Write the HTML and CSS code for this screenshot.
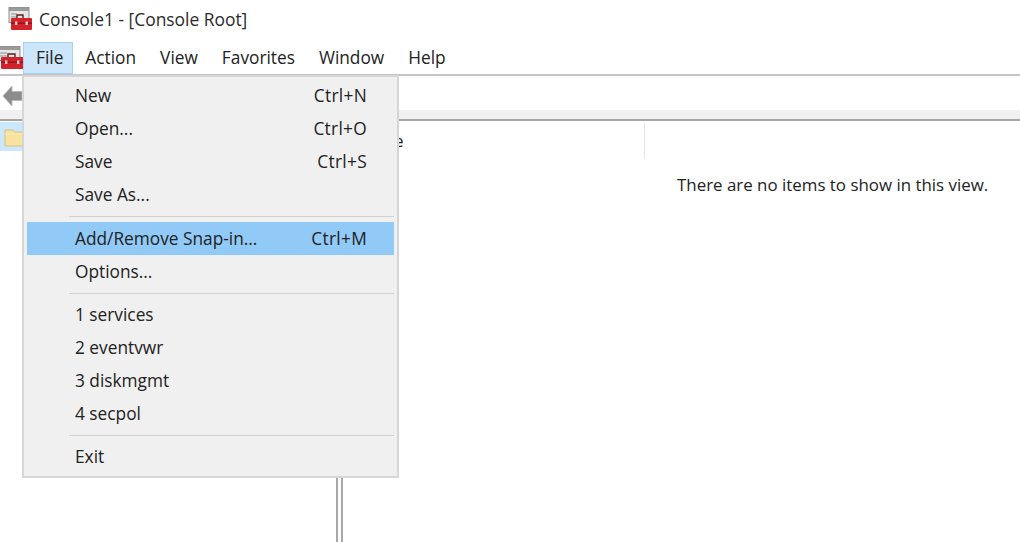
FILE: index.html
```html
<!DOCTYPE html>
<html lang="en">
<head>
<meta charset="utf-8">
<title>Console1 - [Console Root]</title>
<link rel="stylesheet" href="styles.css">
</head>
<body>
<div class="app">
  <header class="titlebar">
    <svg class="title-icon" viewBox="0 0 24 24" aria-hidden="true">
      <rect x="1" y="0.5" width="20" height="15" fill="#e6e6e6" stroke="#8d8d8d"/>
      <rect x="1" y="0.5" width="20" height="3.5" fill="#9a9a9a"/>
      <path d="M3 7h6M3 10h6M3 13h5" stroke="#8d8d8d" fill="none"/>
      <path d="M9 11V8h6v3" fill="none" stroke="#5a2020" stroke-width="1.4"/>
      <rect x="3" y="11" width="21" height="12" rx="1" fill="#d2232a"/>
      <rect x="3" y="15.5" width="21" height="1.4" fill="#8f1418"/>
      <rect x="7" y="14.5" width="2.4" height="3.4" fill="#f3d0d0"/>
      <rect x="17.5" y="14.5" width="2.4" height="3.4" fill="#f3d0d0"/>
    </svg>
    <span class="title-text">Console1 - [Console Root]</span>
  </header>
  <nav class="menubar">
    <svg class="menu-icon" viewBox="0 0 24 24" aria-hidden="true">
      <rect x="-3" y="0.5" width="23" height="14" fill="#e6e6e6" stroke="#8d8d8d"/>
      <rect x="-3" y="0.5" width="23" height="3.5" fill="#9a9a9a"/>
      <path d="M0 7h7M0 10h7" stroke="#8d8d8d" fill="none"/>
      <path d="M8 11V8h7v3" fill="none" stroke="#5a2020" stroke-width="1.4"/>
      <rect x="1" y="11" width="23" height="12" rx="1" fill="#d2232a"/>
      <rect x="1" y="15.5" width="23" height="1.4" fill="#8f1418"/>
      <rect x="5" y="14.5" width="2.4" height="3.4" fill="#f3d0d0"/>
      <rect x="17" y="14.5" width="2.4" height="3.4" fill="#f3d0d0"/>
    </svg>
    <span class="menu-item active">File</span>
    <span class="menu-item">Action</span>
    <span class="menu-item">View</span>
    <span class="menu-item">Favorites</span>
    <span class="menu-item">Window</span>
    <span class="menu-item">Help</span>
  </nav>
  <div class="toolbar">
    <svg class="back-icon" viewBox="0 0 22 24" aria-hidden="true">
      <path d="M1 12 11 1v6h11v10H11v6z" fill="#8c8c8c" stroke="#b5b5b5"/>
    </svg>
  </div>
  <div class="band"></div>
  <main class="panes">
    <aside class="tree">
      <div class="tree-row">
        <svg class="folder-icon" viewBox="0 0 24 20" aria-hidden="true">
          <path d="M1 19V3h8l2 2h13v14z" fill="#f7e2a0" stroke="#d8c07c"/>
          <path d="M1 7h23" stroke="#fbeebb"/>
        </svg>
      </div>
    </aside>
    <div class="splitter"></div>
    <section class="content">
      <div class="columns">
        <span class="column-name">Name</span>
      </div>
      <p class="empty">There are no items to show in this view.</p>
    </section>
  </main>
  <div class="dropdown">
    <div class="row"><span>New</span><span class="key">Ctrl+N</span></div>
    <div class="row"><span>Open...</span><span class="key">Ctrl+O</span></div>
    <div class="row"><span>Save</span><span class="key">Ctrl+S</span></div>
    <div class="row"><span>Save As...</span></div>
    <div class="sep"></div>
    <div class="row selected"><span>Add/Remove Snap-in...</span><span class="key">Ctrl+M</span></div>
    <div class="row"><span>Options...</span></div>
    <div class="sep tight"></div>
    <div class="row"><span>1 services</span></div>
    <div class="row"><span>2 eventvwr</span></div>
    <div class="row"><span>3 diskmgmt</span></div>
    <div class="row"><span>4 secpol</span></div>
    <div class="sep tight"></div>
    <div class="row"><span>Exit</span></div>
  </div>
</div>
</body>
</html>
```
FILE: styles.css
```css
* { box-sizing: border-box; }
html, body { margin: 0; padding: 0; background: #fff; }
body { font-family: "Open Sans", "Noto Sans", sans-serif; color: #222; font-size: 17px; }
.app { position: relative; width: 1020px; height: 542px; overflow: hidden; display: flex; flex-direction: column; }

.titlebar { height: 41px; display: flex; align-items: center; padding: 0 0 4px 8px; gap: 7px; flex: none; }
.title-icon { width: 24px; height: 24px; flex: none; }
.title-text { font-size: 17.4px; color: #2b2b2b; }

.menubar { height: 35px; display: flex; align-items: flex-start; flex: none; border-bottom: 2px solid #c4c4c4; padding-top: 1px; }
.menu-icon { width: 24px; height: 24px; margin: 4px -1px 0 0; flex: none; }
.menu-item { padding: 0 12px; height: 32px; line-height: 31px; font-size: 17.3px; }
.menu-item.active { background: #cde6fb; border: 1px solid #a6d3f5; padding: 0 9px 0 12px; line-height: 30px; }

.toolbar { height: 34px; flex: none; display: flex; align-items: center; padding-left: 2px; }
.back-icon { width: 20px; height: 24px; margin-top: 5px; }
.band { height: 11px; flex: none; background: #f0f0f0; border-bottom: 2px solid #a5a5a5; }

.panes { flex: 1; display: flex; min-height: 0; }
.tree { width: 336px; flex: none; padding-top: 1px; }
.tree-row { height: 29px; background: #cce8ff; display: flex; align-items: center; padding-left: 4px; }
.folder-icon { width: 24px; height: 20px; flex: none; }
.splitter { width: 7px; flex: none; border-left: 2px solid #a9a9a9; border-right: 2px solid #a9a9a9; background: #fff; }

.content { flex: 1; min-width: 0; }
.columns { height: 36px; margin-top: 2px; width: 302px; border-right: 1px solid #e3e3e3; padding-left: 13px; font-size: 17px; line-height: 36px; }
.empty { margin: 14px 0 0 334px; font-size: 16.9px; line-height: 24px; white-space: nowrap; color: #222; }

.dropdown { position: absolute; left: 22px; top: 75px; width: 377px; height: 403px; background: #f0f0f0; border: 2px solid #d6d6d6; padding: 2px 3px 0 3px; }
.row { height: 33px; display: flex; justify-content: space-between; align-items: center; padding: 0 27px 0 48px; font-size: 17.3px; color: #222; }
.row.selected { background: #91c9f7; }
.key { letter-spacing: 0.3px; }
.sep { height: 11px; margin-left: 42px; position: relative; }
.sep.tight { height: 10px; }
.sep::before { content: ""; position: absolute; left: 0; right: 0; top: 5px; height: 1px; background: #d0d0d0; }
```
